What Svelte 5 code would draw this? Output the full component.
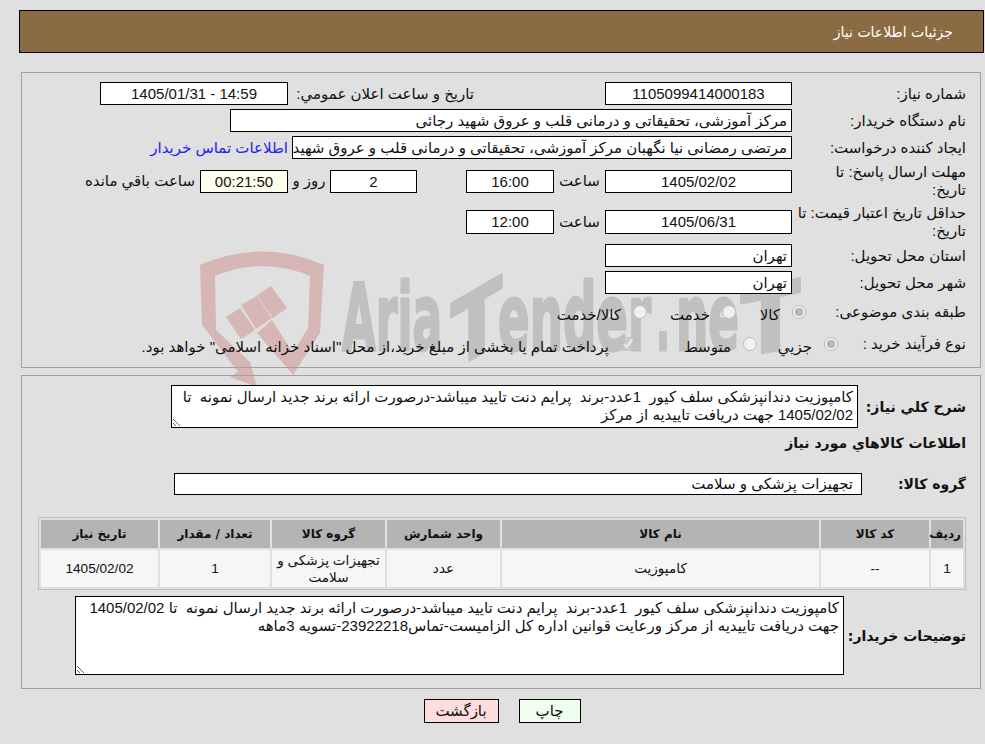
<script lang="ts">
  const descShort = 'کامپوزیت دندانپزشکی سلف کیور  1عدد-برند  پرایم دنت تایید میباشد-درصورت ارائه برند جدید ارسال نمونه  تا\n1405/02/02 جهت دریافت تاییدیه از مرکز';
  const descLong = 'کامپوزیت دندانپزشکی سلف کیور  1عدد-برند  پرایم دنت تایید میباشد-درصورت ارائه برند جدید ارسال نمونه  تا 1405/02/02\nجهت دریافت تاییدیه از مرکز ورعایت قوانین اداره کل الزامیست-تماس23922218-تسویه 3ماهه';

  const columns = [
    { title: 'ردیف', width: 32 },
    { title: 'کد کالا', width: 108 },
    { title: 'نام کالا', width: 317 },
    { title: 'واحد شمارش', width: 113 },
    { title: 'گروه کالا', width: 113 },
    { title: 'تعداد / مقدار', width: 110 },
    { title: 'تاریخ نیاز', width: 117 }
  ];
  const row = ['1', '--', 'کامپوزیت', 'عدد', 'تجهیزات پزشکی و سلامت', '1', '1405/02/02'];
</script>

<div class="page" dir="rtl">
  <svg class="watermark" width="620" height="150" viewBox="190 245 620 150" aria-hidden="true">
    <g fill="#d7b6b6">
      <path d="M200 265 Q262 238 324 265 L320 333 L293 375 L293 353 L308 328 L310 276 Q262 256 215 276 L216 330 L250 362 L257 387 L230 377 L238 372 L202 325 Z" />
      <polygon points="226,317 240,308 255,330 241,339" />
      <polygon points="241,305 257,296 272,318 256,329" />
      <polygon points="257,295 271,286 287,308 273,318" />
      <polygon points="257,333 272,320 293,353 293,375" />
    </g>
    <g fill="#c0c0c0" stroke="#c0c0c0" stroke-width="3" stroke-linejoin="round" font-family="'DejaVu Sans', sans-serif" font-weight="700" font-size="92">
      <text x="342" y="350" textLength="100" lengthAdjust="spacingAndGlyphs">Aria</text>
      <text textLength="51" lengthAdjust="spacingAndGlyphs" transform="translate(451 371) skewY(-30)">T</text>
      <text x="498" y="350" textLength="153" lengthAdjust="spacingAndGlyphs">ender</text>
      <text x="656" y="350" textLength="14" lengthAdjust="spacingAndGlyphs">.</text>
      <text x="676" y="350" textLength="63" lengthAdjust="spacingAndGlyphs">ne</text>
      <text textLength="59" lengthAdjust="spacingAndGlyphs" transform="translate(741 357) skewY(-11)">T</text>
    </g>
  </svg>

  <header class="title">جزئیات اطلاعات نیاز</header>

  <section class="panel first">
    <div class="row h23">
      <div class="label">شماره نیاز:</div>
      <div class="field w187 center">1105099414000183</div>
      <div class="side-label">تاریخ و ساعت اعلان عمومي:</div>
      <div class="field w188 center">14:59 - 1405/01/31</div>
    </div>
    <div class="row h23">
      <div class="label">نام دستگاه خریدار:</div>
      <div class="field w562">مرکز آموزشی، تحقیقاتی و درمانی قلب و عروق شهید رجائی</div>
    </div>
    <div class="row h23">
      <div class="label">ایجاد کننده درخواست:</div>
      <div class="field w500 clip">مرتضی رمضانی نیا نگهبان مرکز آموزشی، تحقیقاتی و درمانی قلب و عروق شهید رجائی</div>
      <a class="contact" href="#contact">اطلاعات تماس خریدار</a>
    </div>
    <div class="row h36">
      <div class="label">مهلت ارسال پاسخ: تا<br />تاریخ:</div>
      <div class="field w187 center">1405/02/02</div>
      <div class="unit w51">ساعت</div>
      <div class="field w88 center">16:00</div>
      <div class="field w87 center ms49">2</div>
      <div class="unit w42">روز و</div>
      <div class="field w88 center pale">00:21:50</div>
      <div class="remain">ساعت باقي مانده</div>
    </div>
    <div class="row h37">
      <div class="label">حداقل تاریخ اعتبار قیمت: تا تاریخ:</div>
      <div class="field w187 center">1405/06/31</div>
      <div class="unit w51">ساعت</div>
      <div class="field w88 center">12:00</div>
    </div>
    <div class="row h23">
      <div class="label">استان محل تحویل:</div>
      <div class="field w187">تهران</div>
    </div>
    <div class="row h23">
      <div class="label">شهر محل تحویل:</div>
      <div class="field w187">تهران</div>
    </div>
    <div class="row h28">
      <div class="label l160">طبقه بندی موضوعی:</div>
      <label class="opt w70"><input type="radio" name="cat" disabled checked /><span>کالا</span></label>
      <label class="opt w89"><input type="radio" name="cat" disabled /><span>خدمت</span></label>
      <label class="opt"><input type="radio" name="cat" disabled /><span>کالا/خدمت</span></label>
    </div>
    <div class="row h28">
      <div class="label l128">نوع فرآیند خرید :</div>
      <label class="opt w81"><input type="radio" name="proc" disabled checked /><span>جزیي</span></label>
      <label class="opt w122"><input type="radio" name="proc" disabled /><span>متوسط</span></label>
      <label class="opt"><input type="checkbox" disabled checked /><span>پرداخت تمام یا بخشی از مبلغ خرید،از محل "اسناد خزانه اسلامی" خواهد بود.</span></label>
    </div>
  </section>

  <section class="panel second">
    <div class="row desc">
      <div class="strong l108">شرح كلي نياز:</div>
      <textarea class="box w687" readonly rows="2" value={descShort}></textarea>
    </div>
    <div class="heading strong">اطلاعات كالاهاي مورد نياز</div>
    <div class="row group">
      <div class="strong l104">گروه کالا:</div>
      <div class="field w688">تجهیزات پزشکی و سلامت</div>
    </div>

    <table>
      <thead>
        <tr>
          {#each columns as col}
            <th style="width: {col.width}px">{col.title}</th>
          {/each}
        </tr>
      </thead>
      <tbody>
        <tr>
          {#each row as cell}
            <td>{cell}</td>
          {/each}
        </tr>
      </tbody>
    </table>

    <div class="row notes">
      <div class="strong l122">توضیحات خریدار:</div>
      <textarea class="box w769" readonly value={descLong}></textarea>
    </div>
  </section>

  <div class="actions">
    <button class="print" type="button">چاپ</button>
    <button class="back" type="button">بازگشت</button>
  </div>
</div>

<style>
  :global(body) {
    margin: 0;
    background: #e0e0e0;
  }

  .page {
    position: relative;
    height: 744px;
    box-sizing: border-box;
    padding: 10px 1px 0 0;
    overflow: hidden;
    font-family: "Liberation Sans", "DejaVu Sans", sans-serif;
    font-size: 15px;
    color: #111;
  }

  .watermark {
    position: absolute;
    left: 190px;
    top: 245px;
    direction: ltr;
  }

  .title {
    position: relative;
    height: 43px;
    margin-left: 19px;
    padding-right: 30px;
    border: 1px solid #000;
    box-sizing: border-box;
    background: #8b6c42;
    color: #fff;
    font-family: "DejaVu Sans", sans-serif;
    font-size: 14px;
    line-height: 43px;
  }

  .panel {
    position: relative;
    margin: 0 3px 0 21px;
    border: 1px solid #a0a0a0;
    box-sizing: border-box;
    padding-right: 14px;
  }

  .first {
    margin-top: 19px;
    height: 296px;
    padding-top: 9px;
  }

  .second {
    margin-top: 7px;
    height: 314px;
    padding-top: 9px;
  }

  .row {
    display: flex;
    align-items: center;
    margin-bottom: 4px;
  }

  .h23 { height: 23px; }
  .h28 { height: 28px; }
  .h36 { height: 36px; }
  .h37 { height: 37px; }

  .label {
    width: 174px;
    flex: none;
    box-sizing: border-box;
    padding-left: 4px;
    line-height: 18px;
  }
  .l160 { width: 160px; }
  .l128 { width: 128px; }

  .field {
    flex: none;
    box-sizing: border-box;
    height: 100%;
    padding: 0 4px;
    border: 1px solid #000;
    background: #fff;
    line-height: 21px;
    white-space: nowrap;
  }
  .center { text-align: center; }
  .clip { overflow: hidden; }
  .pale { background: #ffffee; }
  .h36 .field { height: 23px; }
  .h37 .field { height: 24px; }

  .w87 { width: 87px; }
  .w88 { width: 88px; }
  .w187 { width: 187px; }
  .w188 { width: 188px; }
  .w500 { width: 500px; }
  .w562 { width: 562px; }
  .w688 { width: 688px; }
  .w51 { width: 51px; }
  .w42 { width: 42px; }
  .w70 { width: 70px; }
  .w81 { width: 81px; }
  .w89 { width: 89px; }
  .w122 { width: 122px; }
  .ms49 { margin-right: 49px; }

  .side-label {
    width: 186px;
    flex: none;
    margin-right: 131px;
  }

  .unit {
    flex: none;
    text-align: center;
  }

  .remain {
    margin-right: 5px;
    white-space: nowrap;
  }

  .contact {
    margin-right: 4px;
    color: #2222ee;
    text-decoration: none;
    white-space: nowrap;
  }

  .opt {
    display: flex;
    flex: none;
    align-items: center;
    gap: 12px;
    white-space: nowrap;
  }
  .opt span { padding-top: 5px; }

  input {
    flex: none;
    width: 14px;
    height: 14px;
    margin: 0;
  }

  input[type="radio"] {
    appearance: none;
    box-sizing: border-box;
    border: 1px solid #bdbdbd;
    border-radius: 50%;
    background: #f0f0f0;
  }
  input[type="radio"]:checked {
    background: radial-gradient(circle, #b9b9b9 0 4px, #f0f0f0 4.5px);
  }

  .strong {
    flex: none;
    font-family: "DejaVu Sans", sans-serif;
    font-size: 14px;
    font-weight: 700;
  }
  .l108 { width: 108px; }
  .l104 { width: 104px; }
  .l122 { width: 122px; }

  .box {
    flex: none;
    display: block;
    box-sizing: border-box;
    margin: 0;
    padding: 2px 4px;
    border: 1px solid #000;
    border-radius: 0;
    background: #fff;
    color: #111;
    font: inherit;
    line-height: 18px;
    outline: none;
  }
  .w687 { width: 687px; height: 43px; }
  .w769 { width: 769px; height: 79px; }

  .desc {
    height: 43px;
    margin-bottom: 0;
  }

  .heading {
    height: 45px;
    line-height: 30px;
  }

  .group {
    height: 22px;
    margin-bottom: 22px;
  }
  .group .field { line-height: 20px; padding-right: 8px; }

  table {
    width: 928px;
    margin-bottom: 6px;
    border: 1px solid #c0c0c0;
    border-spacing: 2px;
    table-layout: fixed;
  }

  th, td {
    box-sizing: border-box;
    padding: 0 2px;
    text-align: center;
  }

  th {
    height: 28px;
    background: #b4b4b4;
    font-family: "DejaVu Sans", sans-serif;
    font-size: 12px;
    font-weight: 700;
  }

  td {
    height: 37px;
    background: #f6f6f6;
    font-size: 13.6px;
    line-height: 17px;
  }

  .notes {
    margin-bottom: 0;
  }

  .actions {
    position: relative;
    display: flex;
    justify-content: center;
    gap: 20px;
    margin: 10px 0 0 20px;
  }

  button {
    height: 24px;
    padding: 0;
    border: 1px solid #000;
    border-radius: 0;
    font: inherit;
    color: #111;
  }
  .back { width: 75px; background: #ffdddd; }
  .print { width: 62px; background: #eeffee; }
</style>
